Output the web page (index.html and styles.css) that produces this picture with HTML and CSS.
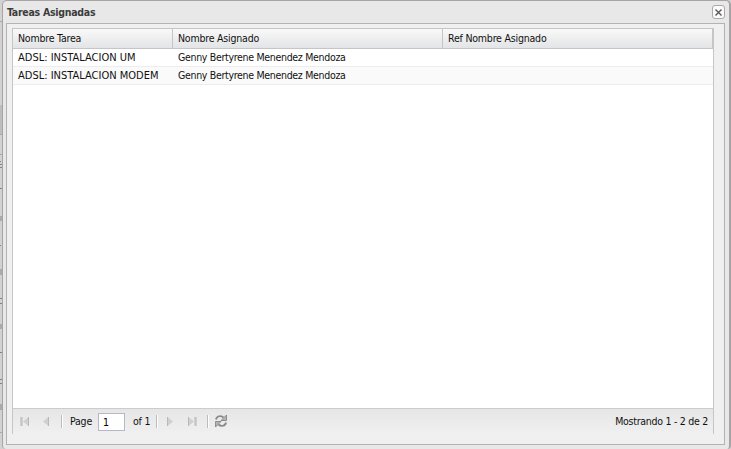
FILE: index.html
```html
<!DOCTYPE html>
<html lang="es">
<head>
<meta charset="utf-8">
<title>Tareas Asignadas</title>
<link rel="stylesheet" href="styles.css">
</head>
<body>
<div class="backdrop" aria-hidden="true">
  <svg width="2" height="449" viewBox="0 0 2 449">
    <path d="M0 21.500h2M0 134.500h2M0 154.500h2M0 432.500h2" stroke="#aaa"/>
    <path d="M0 105h2v29H0z" fill="#bdbdbd"/>
    <path d="M0 161.500h1M0 164.500h2M0 167.500h2M0 188.500h2M1 216v5M0 245.500h1M1 269v6M0 298.500h2M0 303.500h2M1 324v5M0 352.500h2M0 379.500h2M0 383.500h2M1 404v6" stroke="#828487"/>
  </svg>
</div>
<section class="window">
  <header class="titlebar">
    <h1>Tareas Asignadas</h1>
    <button class="close" aria-label="Cerrar"><svg width="13" height="13" viewBox="0 0 13 13"><path d="M3.500 3.500l6 6M9.500 3.500l-6 6" stroke="#585858" stroke-width="1.400" fill="none"/></svg></button>
  </header>
  <div class="frame">
    <div class="panel">
      <div class="row head"><div class="c1">Nombre Tarea</div><div class="c2">Nombre Asignado</div><div class="c3">Ref Nombre Asignado</div></div>
      <div class="body">
        <div class="row"><div class="c1 task">ADSL: INSTALACION UM</div><div class="c2">Genny Bertyrene Menendez Mendoza</div><div class="c3"></div></div>
        <div class="row alt"><div class="c1 task">ADSL: INSTALACION MODEM</div><div class="c2">Genny Bertyrene Menendez Mendoza</div><div class="c3"></div></div>
      </div>
      <footer class="toolbar">
        <svg class="first" width="11" height="11" viewBox="0 0 11 11"><path d="M1 1h2v9H1zM9.500 1v9L4 5.500z" fill="#d0d0d0"/><path d="M3 1v9M9.500 1v9" stroke="#b8b8b8"/></svg>
        <svg class="prev" width="8" height="11" viewBox="0 0 8 11"><path d="M6.500 1v9L1 5.500z" fill="#d0d0d0"/><path d="M6.500 1v9" stroke="#b8b8b8"/></svg>
        <i class="sep"></i>
        <span class="page">Page</span>
        <input value="1" aria-label="Page">
        <span class="of">of 1</span>
        <i class="sep s2"></i>
        <svg class="next" width="8" height="11" viewBox="0 0 8 11"><path d="M1.500 1v9L7 5.500z" fill="#d0d0d0"/><path d="M1.500 1v9" stroke="#b8b8b8"/></svg>
        <svg class="last" width="11" height="11" viewBox="0 0 11 11"><path d="M8 1h2v9H8zM1.500 1v9L7 5.500z" fill="#d0d0d0"/><path d="M1.500 1v9M8 1v9" stroke="#b8b8b8"/></svg>
        <i class="sep s3"></i>
        <svg class="refresh" width="14" height="14" viewBox="0 0 14 14"><path d="M2 5.500C2.500 2 7 1 9.500 3.500M12 8.500C11.500 12 7 13 4.500 10.500" stroke="#8a8a8a" stroke-width="1.800" fill="none"/><path d="M12.500 1v5.500H7zM1.500 13V7.500H7z" fill="#b4b4b4" stroke="#7d7d7d" stroke-width=".8"/></svg>
        <span class="status">Mostrando 1 - 2 de 2</span>
      </footer>
    </div>
  </div>
</section>
</body>
</html>
```
FILE: styles.css
```css
* { box-sizing: border-box; }
body {
  margin: 0;
  width: 731px;
  height: 449px;
  overflow: hidden;
  background: #d2d2d2;
  color: #111;
  font: 10.5px/13px "DejaVu Sans Condensed", "DejaVu Sans", sans-serif;
  letter-spacing: -.27px;
  display: flex;
}
.backdrop { width: 2px; flex: none; }
.backdrop svg { display: block; }
.window {
  width: 729px;
  height: 449px;
  border: 1px solid #a6a4a4;
  border-right-width: 2px;
  border-bottom: 0;
  border-radius: 5px 5px 4px 4px;
  background: #e8e8e8;
  padding: 0 4px 4px 3px;
}
.titlebar { height: 22px; display: flex; justify-content: space-between; padding: 3px 0 0 1px; }
h1 { margin: 2px 0 0; font: bold 10.5px/13px "DejaVu Sans Condensed", sans-serif; color: #3c3c3c; }
.close { width: 13px; height: 14px; margin: 1px 0 0; padding: 0; border: 1px solid #aaa; border-radius: 3px; background: #fafafa; display: flex; align-items: center; justify-content: center; }
.close svg { flex: none; }
.frame { height: 422px; border: 1px solid #b5b2b2; background: #f0f0f0; padding: 4px 11px 10px 5px; }
.panel { width: 702px; height: 406px; border: 1px solid #c6c6c6; border-bottom: 0; display: flex; flex-direction: column; background: #fff; }
.row { display: flex; height: 18px; border-bottom: 1px solid #ededed; white-space: nowrap; letter-spacing: -.31px; }
.row > div { padding: 2px 0 0 5px; }
.row > .task { font-size: 11px; letter-spacing: 0; }
.c1 { width: 160px; }
.c2 { width: 270px; }
.c3 { width: 270px; }
.head { height: 20px; background: linear-gradient(#f9f9f9, #e3e4e6); border-color: #c5c5c5; letter-spacing: -.2px; }
.head > div { border-right: 1px solid #c5c5c5; padding-top: 3px; }
.alt { background: #fafafa; }
.body { flex: 1; }
.toolbar { height: 26px; display: flex; align-items: center; border-top: 1px solid #ccc; background: linear-gradient(#e6e6e6, #f0f0f0); padding: 0 5px 0 6px; white-space: nowrap; }
.toolbar svg { flex: none; }
.prev { margin-left: 12px; }
.sep { width: 2px; height: 13px; background: #bcbcbc; border-right: 1px solid #fff; margin-left: 11px; }
.page { width: 28px; margin-left: 7px; letter-spacing: -.2px; }
input { width: 27px; height: 18px; border: 1px solid #b5b8c8; padding: 0 0 0 4px; margin: 0; font: inherit; background: #fff; }
.of { width: 17px; margin-left: 8px; letter-spacing: -.2px; }
.s2 { margin-left: 6px; }
.next { margin-left: 8px; }
.last { margin-left: 13px; }
.s3 { margin-left: 9px; }
.refresh { margin: -2px 0 0 5px; }
.status { margin-left: auto; }
```
